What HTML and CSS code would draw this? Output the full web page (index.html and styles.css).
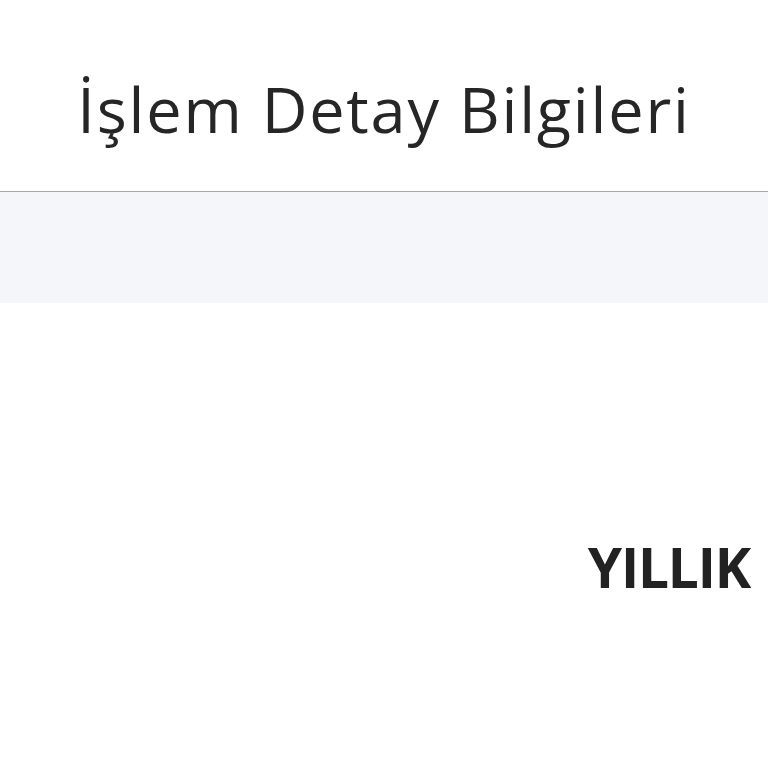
FILE: index.html
```html
<!DOCTYPE html>
<html lang="tr">
<head>
<meta charset="utf-8">
<link rel="stylesheet" href="styles.css">
</head>
<body>
<header class="head">
  <h1 class="title">İşlem Detay Bilgileri</h1>
</header>
<div class="band"></div>
<main class="content">
  <div class="period">YILLIK</div>
</main>
</body>
</html>
```
FILE: styles.css
```css
html, body {
  margin: 0;
  padding: 0;
  background: #ffffff;
  font-family: "Open Sans", "Noto Sans", sans-serif;
  color: #262626;
}
.head {
  height: 192px;
  border-bottom: 1px solid #a9a9a9;
  display: flex;
  align-items: flex-start;
  justify-content: center;
  box-sizing: border-box;
}
.title {
  margin: 0;
  padding-top: 77px;
  font-weight: 400;
  font-size: 63px;
  line-height: 1;
  letter-spacing: 1.8px;
}
.band {
  height: 111px;
  background: #f4f6f9;
}
.content {
  display: flex;
  justify-content: flex-end;
  padding: 0 18px 0 0;
}
.period {
  margin-top: 236px;
  font-weight: 700;
  font-size: 55px;
  line-height: 1;
  letter-spacing: -1.2px;
  color: #222;
}
```
